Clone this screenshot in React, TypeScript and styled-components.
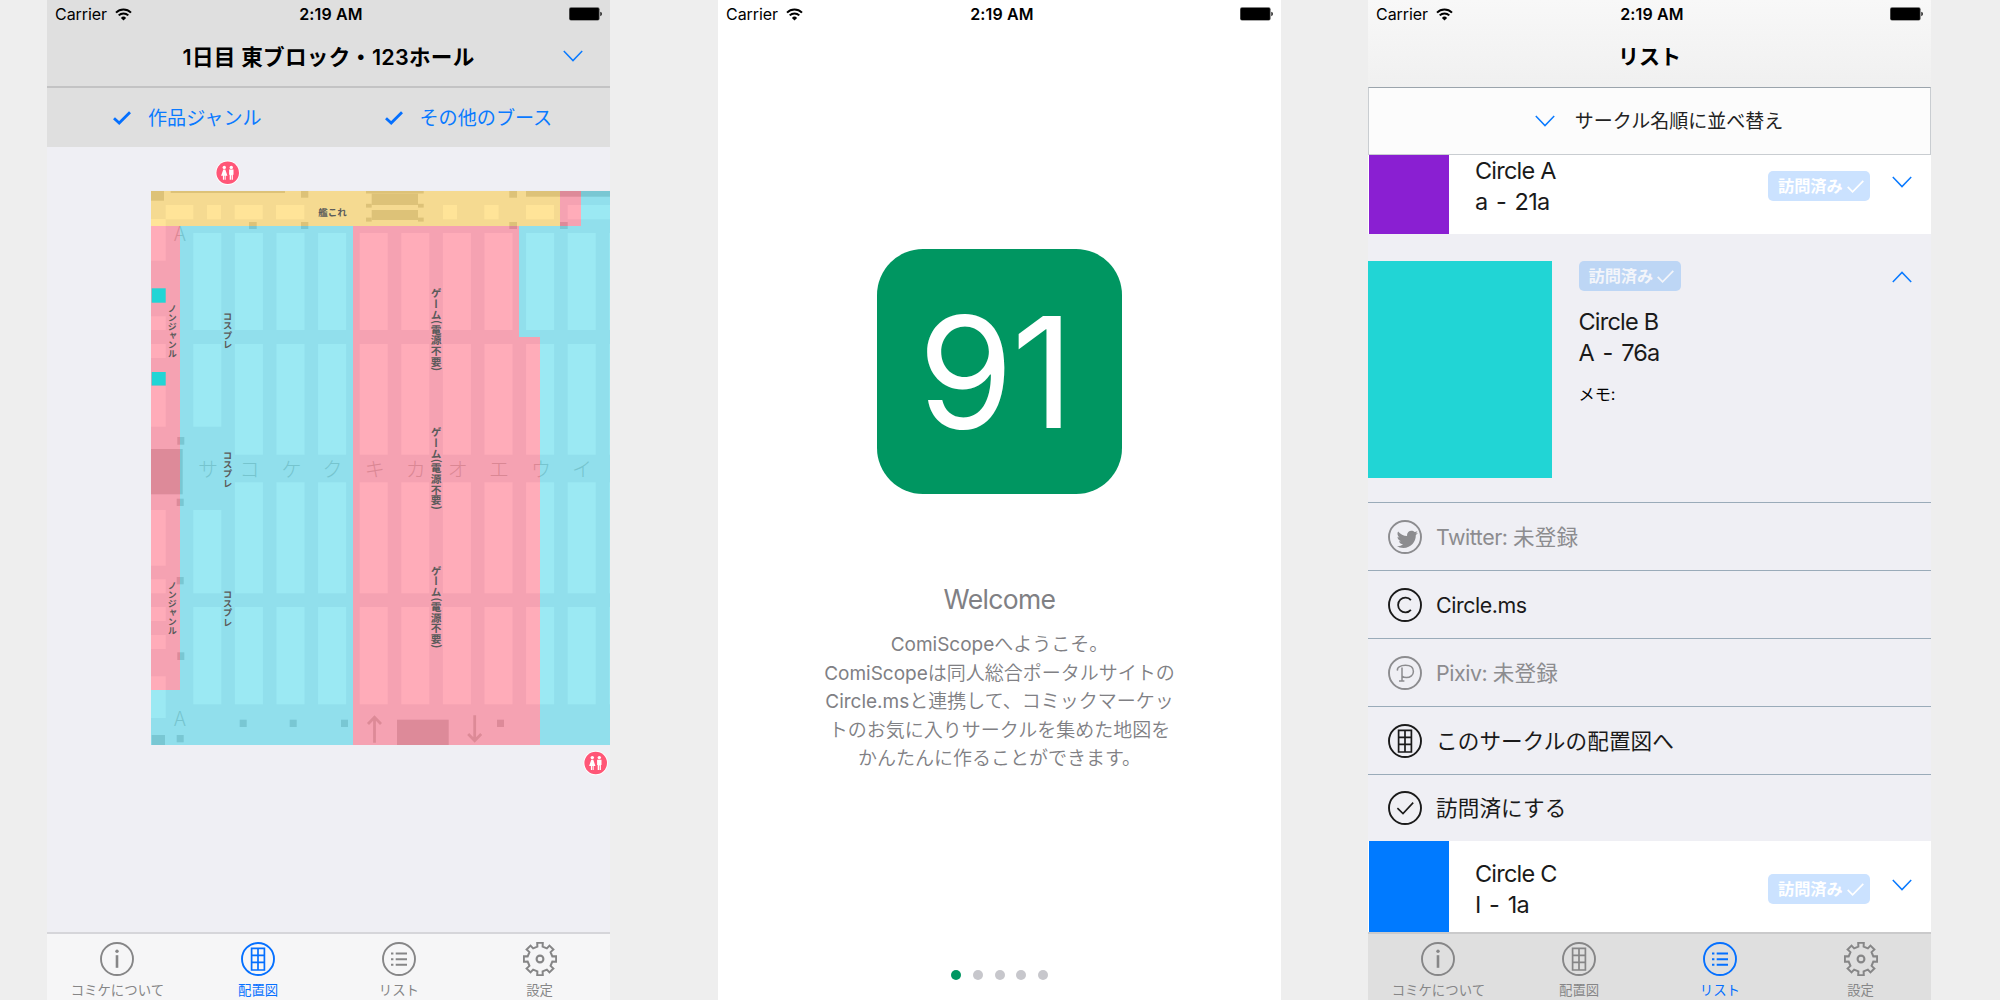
import React from "react";
import styled, { createGlobalStyle } from "styled-components";
import { FaTwitter } from "react-icons/fa";

const BLUE = "#0a7aff";
const FONT = `Inter, "Noto Sans CJK JP", sans-serif`;

const GlobalStyle = createGlobalStyle`
  *, *::before, *::after { box-sizing: border-box; }
  body { margin: 0; background: #eeeeee; font-family: ${FONT}; }
`;

/* ---------- Frame ---------- */

const Stage = styled.main`
  display: flex;
  width: 2000px;
  height: 1000px;
  padding-left: 47px;
  overflow: hidden;
  background: #eeeeee;
`;

const Phone = styled.section<{ $bg: string; $gap?: number }>`
  display: flex;
  flex-direction: column;
  flex: none;
  width: 563px;
  height: 1000px;
  margin-left: ${(p) => p.$gap ?? 0}px;
  background: ${(p) => p.$bg};
  overflow: hidden;
`;

const StatusRow = styled.div`
  display: grid;
  grid-template-columns: 1fr auto 1fr;
  align-items: center;
  flex: none;
  height: 28px;
  padding: 0 8px;
  color: #000;
  font-size: 16px;
  line-height: 28px;
`;

const CarrierGroup = styled.div`
  display: flex;
  align-items: center;
  gap: 8px;
  letter-spacing: -0.05px;
`;

const Clock = styled.div`
  padding-left: 5px;
  font-weight: 600;
  letter-spacing: 0.15px;
`;

const BatteryIcon = styled.svg`
  justify-self: end;
`;

const Wifi = () => (
  <svg width="17" height="13" viewBox="0 0 17 13" fill="none" stroke="#000" strokeWidth="2">
    <path d="M1 4.6 A10.6 10.6 0 0 1 16 4.6" />
    <path d="M3.7 7.4 A6.8 6.8 0 0 1 13.3 7.4" />
    <path d="M8.5 12.6 L5.9 9.9 A3.7 3.7 0 0 1 11.1 9.9 Z" fill="#000" stroke="none" />
  </svg>
);

const StatusBar = () => (
  <StatusRow>
    <CarrierGroup>
      Carrier
      <Wifi />
    </CarrierGroup>
    <Clock>2:19 AM</Clock>
    <BatteryIcon width="33" height="14" viewBox="0 0 33 14">
      <rect x="0" y="0.2" width="30.6" height="13.4" rx="2" fill="#555" />
      <rect x="0.8" y="0.9" width="29" height="12" rx="1.2" />
      <path d="M31.4 4.8 a2.4 2.4 0 0 1 0 4.4 z" />
    </BatteryIcon>
  </StatusRow>
);

/* ---------- Shared icons ---------- */

const Chevron = ({ up = false }: { up?: boolean }) => (
  <svg width="20" height="12" viewBox="0 0 20 12" fill="none" stroke={BLUE} strokeWidth="1.5">
    <path d={up ? "M0.8 11 L10 1.4 L19.2 11" : "M0.8 1 L10 10.6 L19.2 1"} />
  </svg>
);

const BoldCheck = () => (
  <svg width="18" height="14" viewBox="0 0 18 14" fill="none" stroke="#0570ff" strokeWidth="2.8">
    <path d="M1 7.2 L6.2 12 L17 1.2" />
  </svg>
);

type Glyph = "info" | "grid" | "list" | "gear" | "twitter" | "circlems" | "pixiv" | "check";

const gearPath = () => {
  const teeth = 8;
  const pts: string[] = [];
  for (let i = 0; i < teeth; i++) {
    const mid = (i * 2 * Math.PI) / teeth - Math.PI / 2;
    const corners: [number, number][] = [
      [12.6, -0.21],
      [16.4, -0.17],
      [16.4, 0.17],
      [12.6, 0.21],
    ];
    corners.forEach(([r, a]) => {
      pts.push(`${(17 + r * Math.cos(mid + a)).toFixed(2)} ${(17 + r * Math.sin(mid + a)).toFixed(2)}`);
    });
  }
  return `M${pts.join("L")}Z`;
};

const GEAR = gearPath();

const Icon = ({ name }: { name: Glyph }) => (
  <svg width="34" height="34" viewBox="0 0 34 34" fill="none" stroke="currentColor" strokeWidth="1.9">
    {name !== "gear" && <circle cx="17" cy="17" r="16" />}
    {name === "info" && (
      <>
        <path d="M17 13.2 V25.8" strokeWidth="2.6" />
        <circle cx="17" cy="9.3" r="1.7" fill="currentColor" stroke="none" />
      </>
    )}
    {name === "grid" && (
      <path d="M10.6 6.4 H23.4 V28 H10.6 Z M17 6.4 V28 M10.6 13.4 H23.4 M10.6 20.4 H23.4" strokeWidth="1.7" />
    )}
    {name === "list" && (
      <path
        d="M9 11.6 H11.4 M9 17.2 H11.4 M9 22.7 H11.4 M13.7 11.6 H25 M13.7 17.2 H25 M13.7 22.7 H25"
        strokeWidth="2"
      />
    )}
    {name === "gear" && (
      <>
        <path d={GEAR} strokeWidth="2" />
        <circle cx="17" cy="17" r="3.4" strokeWidth="2.1" />
      </>
    )}
    {name === "twitter" && <FaTwitter x="8.6" y="8.7" width="17" height="17" stroke="none" />}
    {name === "circlems" && <path d="M22.9 12.2 A7.3 7.3 0 1 0 22.9 21.8" strokeWidth="1.8" />}
    {name === "pixiv" && (
      <path
        d="M9.6 14.6 C8.4 11.6 12.5 9.3 17.4 9.3 C22.6 9.3 25.4 11.8 25.4 15.4 C25.4 19 22.4 21.6 18.4 21.6 C16.4 21.6 15 21 14 20.2 M14 11.4 V24.6 M11 24.9 H16.4"
        strokeWidth="1.5"
      />
    )}
    {name === "check" && <path d="M9.4 17.2 L15 22.6 L25.2 11.6" strokeWidth="1.6" />}
  </svg>
);

/* ---------- Tab bar ---------- */

const TabBarRow = styled.nav<{ $dark?: boolean }>`
  display: grid;
  grid-template-columns: repeat(4, 1fr);
  flex: none;
  height: 68px;
  border-top: 2px solid ${(p) => (p.$dark ? "#cacacb" : "#d6d6da")};
  background: ${(p) => (p.$dark ? "#dfdfdf" : "#f6f6f7")};
`;

const Tab = styled.div<{ $active: boolean }>`
  display: flex;
  flex-direction: column;
  align-items: center;
  gap: 4px;
  padding-top: 8px;
  color: ${(p) => (p.$active ? "#0570ff" : "#868687")};
  font-size: 13.4px;
  line-height: 20px;
  white-space: nowrap;
`;

const TABS: { label: string; icon: Glyph }[] = [
  { label: "コミケについて", icon: "info" },
  { label: "配置図", icon: "grid" },
  { label: "リスト", icon: "list" },
  { label: "設定", icon: "gear" },
];

const TabBar = ({ active, dark }: { active: string; dark?: boolean }) => (
  <TabBarRow $dark={dark}>
    {TABS.map((t) => (
      <Tab key={t.label} $active={t.label === active}>
        <Icon name={t.icon} />
        {t.label}
      </Tab>
    ))}
  </TabBarRow>
);

/* ---------- Header ---------- */

const Header = styled.header<{ $light?: boolean }>`
  flex: none;
  height: ${(p) => (p.$light ? 87 : 88)}px;
  border-bottom: ${(p) => (p.$light ? "none" : "2px solid #c3c3c4")};
  background: ${(p) => (p.$light ? "linear-gradient(#f8f8f8, #f0f0f0)" : "#dfdfdf")};
`;

const NavRow = styled.div`
  display: grid;
  grid-template-columns: 1fr auto 1fr;
  align-items: center;
  height: 58px;
  padding-right: 27px;
  padding-left: 27px;
`;

const NavTitle = styled.h1<{ $wide?: boolean }>`
  grid-column: 2;
  margin: 0;
  color: #000;
  font-size: ${(p) => (p.$wide ? 21.6 : 21)}px;
  font-weight: 600;
  letter-spacing: ${(p) => (p.$wide ? 0.25 : 0)}px;
  line-height: 58px;
  white-space: nowrap;
`;

const NavAction = styled.div`
  display: flex;
  justify-self: end;
  padding-bottom: 3px;
`;

/* ---------- Map screen ---------- */

const FilterRow = styled.div`
  display: grid;
  grid-template-columns: 273px 1fr;
  flex: none;
  height: 59px;
  background: #dfdfdf;
`;

const Filter = styled.div<{ $inset: number }>`
  display: flex;
  align-items: center;
  gap: 17px;
  padding-left: ${(p) => p.$inset}px;
  color: ${BLUE};
  font-size: 19.1px;
  line-height: 58px;
  white-space: nowrap;
`;

const MapCanvas = styled.svg`
  display: block;
  flex: none;
  width: 563px;
  height: 785px;
`;

const RowLabel = styled.text`
  fill: #a2a2a2;
  font-family: "Noto Sans CJK JP", sans-serif;
  font-size: 20px;
  font-weight: 300;
  text-anchor: middle;
`;

const GenreLabel = styled.text<{ $size: number; $vertical?: boolean }>`
  fill: #5a5a5a;
  font-family: "Noto Sans CJK JP", sans-serif;
  font-size: ${(p) => p.$size}px;
  font-weight: 700;
  text-rendering: geometricPrecision;
  writing-mode: ${(p) => (p.$vertical ? "vertical-rl" : "horizontal-tb")};
`;

type Box = [x: number, y: number, w: number, h: number];

const COLUMNS = Array.from({ length: 11 }, (_, i) => 193.3 + 41.6 * i);

const booths: Box[] = COLUMNS.flatMap((x, i): Box[] => [
  [x, 233, 28, 97],
  [x, 344, 28, i === 0 ? 82.7 : 110.7],
  [x, i === 0 ? 510 : 482.3, 28, i === 0 ? 83.3 : 111],
  [x, 607, 28, 97.3],
]).concat([
  [165.7, 205, 27.6, 14.3],
  [207, 205, 14, 14.3],
  [234.7, 205, 28, 14.3],
  [276, 205, 28.3, 14.3],
  [443, 205, 14, 14.3],
  [484.3, 205, 14.3, 14.3],
  [526, 205, 28, 14.3],
  [567.7, 205, 43, 14.3],
  [151, 219, 14.7, 41.7],
  [151, 316.3, 14.7, 13.7],
  [151, 344, 14.7, 14],
  [151, 386, 14.7, 40.7],
  [151, 510, 14.7, 55.7],
  [151, 579.3, 14.7, 14],
  [151, 607, 14.7, 14],
  [151, 635, 14.7, 14],
  [151, 676.3, 14.7, 41.7],
]);

const walls: Box[] = [
  [151, 191, 13, 9.7],
  [170.7, 191, 114.3, 2],
  [301, 191, 7.3, 6.7],
  [366, 191, 57.7, 2.5],
  [371.7, 193.5, 46.3, 11.5],
  [366, 203.8, 5.7, 3.8],
  [418, 203.8, 5.7, 3.8],
  [371.7, 210, 46.3, 10],
  [366, 217.6, 5.7, 4],
  [418, 217.6, 5.7, 4],
  [509.3, 191, 7.7, 6.7],
  [526, 191, 85, 5.7],
  [249, 222, 7.7, 7],
  [301, 222, 7.3, 7],
  [509.3, 222, 7.7, 7],
  [560, 222, 7.7, 7],
  [177.3, 437, 7, 7.7],
  [151, 449, 31.7, 45.3],
  [176.7, 498.7, 7, 7.3],
  [176.7, 577, 7, 7.3],
  [177.3, 652.3, 7, 7.7],
  [151.7, 735, 13.3, 10],
  [176.7, 735, 7, 7.3],
  [239.7, 719.7, 7, 7.3],
  [289.7, 719.7, 7, 7.3],
  [341, 719.7, 7, 7.3],
  [497, 719.7, 7, 7.3],
  [397, 719.7, 51.7, 25.3],
];

const rowLabels: [string, number][] = [
  ["サ", 208], ["コ", 249.5], ["ケ", 291.5], ["ク", 332.5], ["キ", 374.7],
  ["カ", 415.7], ["オ", 457.7], ["エ", 499], ["ウ", 541], ["イ", 582],
];

const Boxes = ({ items, fill }: { items: Box[]; fill: string }) => (
  <g fill={fill}>
    {items.map(([x, y, w, h]) => (
      <rect key={`${x}-${y}`} x={x} y={y} width={w} height={h} />
    ))}
  </g>
);

const RestroomPin = ({ x, y }: { x: number; y: number }) => (
  <g transform={`translate(${x} ${y})`}>
    <circle r="12.2" fill="#fff" />
    <circle r="11.3" fill="#ff5677" />
    <g fill="#fff">
      <circle cx="-3.4" cy="-5.4" r="1.7" />
      <path d="M-4.4 -3.2 H-2.4 L-0.3 3 H-2 V7 H-3.1 V3 H-3.7 V7 H-4.8 V3 H-6.6 Z" />
      <circle cx="3.6" cy="-5.4" r="1.7" />
      <path d="M1.4 -3.2 H5.8 V2 H5.2 V7 H3.9 V2.4 H3.3 V7 H2 V2 H1.4 Z" />
    </g>
  </g>
);

const FloorMap = () => (
  <MapCanvas viewBox="47 147 563 785" preserveAspectRatio="xMinYMin slice">
    <rect x="151" y="190.7" width="460" height="554.3" fill="#e6e6ee" />
    <Boxes items={booths} fill="#ffffff" />
    <Boxes items={walls} fill="#aaaaae" />
    {rowLabels.map(([label, x]) => (
      <RowLabel key={label} x={x} y={476.6}>
        {label}
      </RowLabel>
    ))}
    <RowLabel x={180} y={240.6}>A</RowLabel>
    <RowLabel x={180} y={725.6}>A</RowLabel>
    <path
      d="M374.5 742.7 V717.5 M368 724 L374.5 717.2 L381 724 M474.7 715.3 V740.5 M468.2 734 L474.7 740.8 L481.2 734"
      fill="none"
      stroke="#aaaaaa"
      strokeWidth="2.8"
    />
    <g fillOpacity="0.6" shapeRendering="crispEdges">
      <path d="M151 191 H560 V226 H151 Z" fill="#ffd253" />
      <path d="M560 191 H581 V226 H560 Z M151 226 H180 V690 H151 Z M353 226 H519 V337 H540 V745 H353 Z" fill="#ff758a" />
      <path d="M581 191 H611 V745 H540 V337 H519 V226 H581 Z M180 226 H353 V745 H151 V690 H180 Z" fill="#58daeb" />
    </g>
    <rect x="151.7" y="288.3" width="14" height="14.4" fill="#21d5d5" />
    <rect x="151.7" y="372" width="14" height="13.5" fill="#21d5d5" />
    <GenreLabel $size={9.5} x={318.3} y={216.2}>艦これ</GenreLabel>
    {[304, 581].map((y) => (
      <GenreLabel key={y} $size={9} $vertical x={172.3} y={y}>ノンジャンル</GenreLabel>
    ))}
    {[312, 450.7, 589.7].map((y) => (
      <GenreLabel key={y} $size={9.3} $vertical x={227.7} y={y}>コスプレ</GenreLabel>
    ))}
    {[288, 426.7, 565.3].map((y) => (
      <GenreLabel key={y} $size={10.7} $vertical x={436.2} y={y}>ゲーム(電源不要)</GenreLabel>
    ))}
    <RestroomPin x={227.7} y={172.8} />
    <RestroomPin x={595.7} y={763} />
  </MapCanvas>
);

const MapScreen = () => (
  <Phone $bg="#efeff4">
    <Header>
      <StatusBar />
      <NavRow>
        <NavTitle $wide>1日目 東ブロック・123ホール</NavTitle>
        <NavAction>
          <Chevron />
        </NavAction>
      </NavRow>
    </Header>
    <FilterRow>
      <Filter $inset={66}>
        <BoldCheck />
        作品ジャンル
      </Filter>
      <Filter $inset={64.5}>
        <BoldCheck />
        その他のブース
      </Filter>
    </FilterRow>
    <FloorMap />
    <TabBar active="配置図" />
  </Phone>
);

/* ---------- Welcome screen ---------- */

const Intro = styled.div`
  display: flex;
  flex: 1;
  flex-direction: column;
  align-items: center;
`;

const AppIcon = styled.div`
  width: 245px;
  height: 245px;
  margin-top: 221px;
  padding-right: 9px;
  border-radius: 46px;
  background: #009661;
  color: #fff;
  font-size: 154px;
  font-weight: 370;
  letter-spacing: -2px;
  line-height: 246px;
  text-align: center;
`;

const WelcomeTitle = styled.h2`
  margin: 85px 0 0;
  color: #808084;
  font-size: 26.5px;
  font-weight: 400;
  letter-spacing: -0.65px;
  line-height: 40px;
`;

const WelcomeText = styled.p`
  margin: 12px 0 0;
  color: #808084;
  font-size: 19px;
  font-weight: 350;
  line-height: 28.6px;
  text-align: center;
  white-space: nowrap;
`;

const Dots = styled.div`
  display: flex;
  gap: 11.8px;
  margin-top: auto;
  margin-bottom: 20px;
`;

const Dot = styled.span<{ $active?: boolean }>`
  width: 10px;
  height: 10px;
  border-radius: 50%;
  background: ${(p) => (p.$active ? "#009661" : "#c7c7cc")};
`;

const Latin = styled.span`
  font-weight: 400;
  letter-spacing: 0;
  line-height: 0;
`;

const WelcomeScreen = () => (
  <Phone $bg="#ffffff" $gap={108}>
    <StatusBar />
    <Intro>
      <AppIcon>91</AppIcon>
      <WelcomeTitle>Welcome</WelcomeTitle>
      <WelcomeText>
        <Latin>ComiScope</Latin>へようこそ。
        <br />
        <Latin>ComiScope</Latin>は同人総合ポータルサイトの
        <br />
        <Latin>Circle.ms</Latin>と連携して、コミックマーケッ
        <br />
        トのお気に入りサークルを集めた地図を
        <br />
        かんたんに作ることができます。
      </WelcomeText>
      <Dots>
        {[0, 1, 2, 3, 4].map((n) => (
          <Dot key={n} $active={n === 0} />
        ))}
      </Dots>
    </Intro>
  </Phone>
);

/* ---------- List screen ---------- */

const SortBar = styled.div`
  display: flex;
  align-items: center;
  justify-content: center;
  flex: none;
  gap: 20px;
  height: 68px;
  padding-left: 19px;
  border: 1px solid #c9cdd1;
  border-top-color: #9ba4ac;
  background: #fcfcfc;
  color: #222;
  font-size: 19px;
  line-height: 66px;
`;

const SortLabel = styled.span`
  padding-top: 2px;
`;

const CircleRow = styled.div<{ $height: number }>`
  display: flex;
  flex: none;
  height: ${(p) => p.$height}px;
  padding-left: 1px;
  background: #fff;
`;

const Swatch = styled.div<{ $color: string }>`
  flex: none;
  width: 80px;
  background: ${(p) => p.$color};
`;

const CircleText = styled.div<{ $top?: number }>`
  flex: 1;
  padding-top: ${(p) => p.$top ?? 0}px;
  padding-left: 26px;
`;

const CircleLine = styled.div<{ $code?: boolean }>`
  color: #1a1a1a;
  font-size: 23.5px;
  font-weight: 400;
  letter-spacing: -0.8px;
  line-height: 31px;
  white-space: nowrap;
  word-spacing: ${(p) => (p.$code ? 2.8 : 0)}px;
`;

const RowEnd = styled.div<{ $top: number }>`
  display: flex;
  align-items: flex-start;
  gap: 22px;
  padding-top: ${(p) => p.$top}px;
  padding-right: 19px;
`;

const ChevronSlot = styled.div<{ $top: number }>`
  display: flex;
  padding-top: ${(p) => p.$top}px;
`;

const BadgeBox = styled.div<{ $muted?: boolean }>`
  display: flex;
  align-items: center;
  flex: none;
  gap: 4px;
  width: 102px;
  height: 30px;
  padding-left: 10px;
  border-radius: 5px;
  background: ${(p) => (p.$muted ? "#bdd6f5" : "#cbe2ff")};
  color: ${(p) => (p.$muted ? "#f3f5fa" : "#ffffff")};
  font-size: 16.2px;
  font-weight: 600;
  line-height: 30px;
  white-space: nowrap;
`;

const VisitedBadge = ({ muted }: { muted?: boolean }) => (
  <BadgeBox $muted={muted}>
    訪問済み
    <svg width="17" height="13" viewBox="0 0 17 13" fill="none" stroke="currentColor" strokeWidth="1.7">
      <path d="M0.7 6.8 L5.6 11.8 L16.3 0.8" />
    </svg>
  </BadgeBox>
);

const Detail = styled.div`
  display: flex;
  flex: none;
  height: 268px;
  padding-top: 27px;
`;

const Cover = styled.div`
  flex: none;
  width: 184px;
  height: 217px;
  background: #21d5d5;
`;

const DetailBody = styled.div`
  display: flex;
  flex: 1;
  flex-direction: column;
  padding-left: 26.5px;
`;

const DetailName = styled.div`
  margin-top: 15px;
`;

const Memo = styled.div`
  margin-top: 14px;
  color: #000;
  font-size: 16.2px;
  line-height: 24px;
`;

const ActionRow = styled.div<{ $muted?: boolean; $last?: boolean }>`
  display: flex;
  align-items: center;
  flex: none;
  gap: 14px;
  height: ${(p) => (p.$last ? 67 : 68)}px;
  padding-left: 20px;
  border-top: 1px solid #9aabb9;
  color: ${(p) => (p.$muted ? "#8c8c8f" : "#1a1a1a")};
  font-size: 21.4px;
  font-weight: 400;
  line-height: 66px;
  letter-spacing: -0.45px;
`;

const Kana = styled.span`
  font-size: 21.6px;
  letter-spacing: 0.1px;
`;

const ListScreen = () => (
  <Phone $bg="#efeff4" $gap={87}>
    <Header $light>
      <StatusBar />
      <NavRow>
        <NavTitle>リスト</NavTitle>
      </NavRow>
    </Header>
    <SortBar>
      <Chevron />
      <SortLabel>サークル名順に並べ替え</SortLabel>
    </SortBar>
    <CircleRow $height={79}>
      <Swatch $color="#8a1fd2" />
      <CircleText>
        <CircleLine>Circle A</CircleLine>
        <CircleLine $code>a - 21a</CircleLine>
      </CircleText>
      <RowEnd $top={16}>
        <VisitedBadge />
        <ChevronSlot $top={5}>
          <Chevron />
        </ChevronSlot>
      </RowEnd>
    </CircleRow>
    <Detail>
      <Cover />
      <DetailBody>
        <VisitedBadge muted />
        <DetailName>
          <CircleLine>Circle B</CircleLine>
          <CircleLine $code>A - 76a</CircleLine>
        </DetailName>
        <Memo>メモ:</Memo>
      </DetailBody>
      <RowEnd $top={10}>
        <Chevron up />
      </RowEnd>
    </Detail>
    <ActionRow $muted>
      <Icon name="twitter" />
      <span>
        Twitter: <Kana>未登録</Kana>
      </span>
    </ActionRow>
    <ActionRow>
      <Icon name="circlems" />
      Circle.ms
    </ActionRow>
    <ActionRow $muted>
      <Icon name="pixiv" />
      <span>
        Pixiv: <Kana>未登録</Kana>
      </span>
    </ActionRow>
    <ActionRow>
      <Icon name="grid" />
      <Kana>このサークルの配置図へ</Kana>
    </ActionRow>
    <ActionRow $last>
      <Icon name="check" />
      <Kana>訪問済にする</Kana>
    </ActionRow>
    <CircleRow $height={91}>
      <Swatch $color="#007aff" />
      <CircleText $top={17}>
        <CircleLine>Circle C</CircleLine>
        <CircleLine $code>I - 1a</CircleLine>
      </CircleText>
      <RowEnd $top={33}>
        <VisitedBadge />
        <ChevronSlot $top={5}>
          <Chevron />
        </ChevronSlot>
      </RowEnd>
    </CircleRow>
    <TabBar active="リスト" dark />
  </Phone>
);

export default function App() {
  return (
    <>
      <GlobalStyle />
      <Stage>
        <MapScreen />
        <WelcomeScreen />
        <ListScreen />
      </Stage>
    </>
  );
}
